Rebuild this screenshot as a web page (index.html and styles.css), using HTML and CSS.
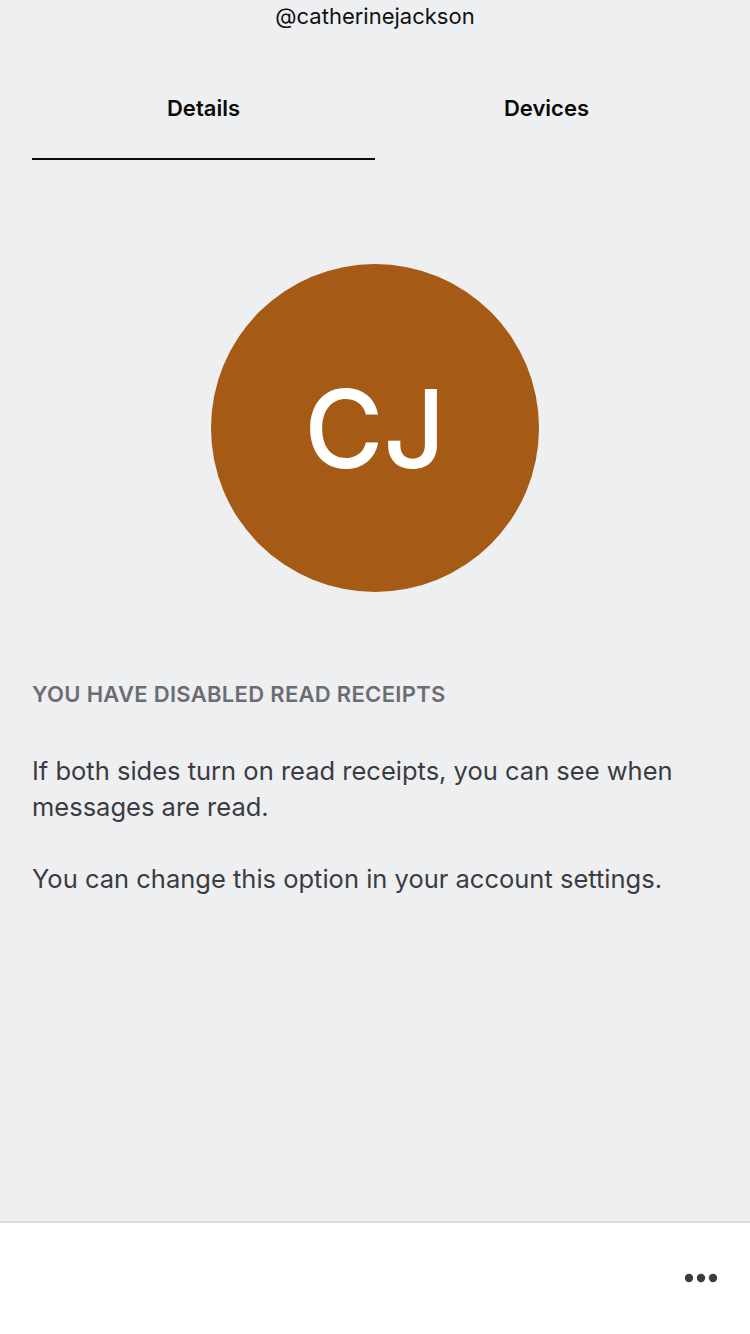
FILE: index.html
```html
<!DOCTYPE html>
<html>
<head>
<meta charset="utf-8">
<link rel="stylesheet" href="styles.css">
</head>
<body>
<div class="page">
  <div class="main">
    <div class="username">@catherinejackson</div>
    <div class="tabs">
      <div class="tab active">Details</div>
      <div class="tab">Devices</div>
    </div>
    <div class="avatar-wrap">
      <div class="avatar">CJ</div>
    </div>
    <div class="info">
      <div class="heading">YOU HAVE DISABLED READ RECEIPTS</div>
      <p class="text">If both sides turn on read receipts, you can see when messages are read.</p>
      <p class="text">You can change this option in your account settings.</p>
    </div>
  </div>
  <div class="footer">
    <svg class="more" width="34" height="10" viewBox="0 0 34 10">
      <circle cx="5" cy="5" r="4.2" fill="#3b3d42"/>
      <circle cx="17" cy="5" r="4.2" fill="#3b3d42"/>
      <circle cx="29" cy="5" r="4.2" fill="#3b3d42"/>
    </svg>
  </div>
</div>
</body>
</html>
```
FILE: styles.css
```css
html, body {
  margin: 0;
  padding: 0;
}
body {
  font-family: Inter, "Noto Sans", sans-serif;
  background: #eeeff1;
  width: 750px;
  height: 1334px;
  overflow: hidden;
}
.page {
  display: flex;
  flex-direction: column;
  height: 1334px;
}
.main {
  flex: 1;
  display: flex;
  flex-direction: column;
}
.username {
  text-align: center;
  font-size: 22px;
  line-height: 32px;
  color: #111;
}
.tabs {
  display: flex;
  margin: 0 32px;
  padding-top: 62px;
}
.tab {
  flex: 1;
  text-align: center;
  font-size: 22px;
  font-weight: 600;
  color: #0b0b0b;
  line-height: 28px;
  padding-bottom: 36px;
  border-bottom: 2px solid transparent;
}
.tab.active {
  border-bottom-color: #0b0b0b;
}
.avatar-wrap {
  display: flex;
  justify-content: center;
  padding-top: 104px;
}
.avatar {
  width: 328px;
  height: 328px;
  border-radius: 50%;
  background: #a55a16;
  color: #fff;
  font-size: 108px;
  font-weight: 500;
  display: flex;
  align-items: center;
  justify-content: center;
}
.info {
  padding: 88px 32px 0;
}
.heading {
  font-size: 22px;
  font-weight: 600;
  color: #6b6d72;
  line-height: 28px;
  letter-spacing: 0.3px;
}
.text {
  margin: 0;
  font-size: 25.5px;
  line-height: 36px;
  color: #3a3c41;
}
.heading + .text {
  margin-top: 45px;
}
.text + .text {
  margin-top: 36px;
}
.footer {
  height: 111px;
  background: #fff;
  border-top: 2px solid #dcdee1;
  display: flex;
  align-items: center;
  justify-content: flex-end;
  padding-right: 32px;
}
.more {
  margin-top: -2px;
}
```
